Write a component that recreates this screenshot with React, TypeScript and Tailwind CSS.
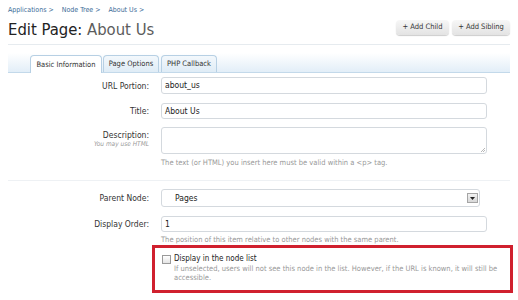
import React from 'react';

const Row = ({ label, sub, children, top, h }: { label: string; sub?: string; children: React.ReactNode; top: string; h?: string }) => (
  <div className={`flex ${top}`}>
    <div className={`w-[142px] shrink-0 pr-[1px] text-right ${h ?? ''}`}>
      <div className="text-[8.5px] leading-[10px] text-[#333]">{label}</div>
      {sub && <div className="text-[6.5px] italic leading-[9px] text-[#999]">{sub}</div>}
    </div>
    <div className="ml-[11px] flex-1">{children}</div>
  </div>
);

export default function App() {
  return (
    <div className="h-[300px] w-[518px] overflow-hidden bg-white px-[8px] font-['DejaVu_Sans_Condensed','DejaVu_Sans',sans-serif] text-[#333]">
      {/* breadcrumb */}
      <div className="flex gap-[8px] pt-[6px] text-[7px] leading-[9px] text-[#3c6c97]">
        <span>Applications &gt;</span>
        <span>Node Tree &gt;</span>
        <span>About Us &gt;</span>
      </div>

      {/* title + buttons */}
      <div className="mt-[4px] flex h-[22px] items-center justify-between border-b border-[#e6ebef] pb-[3px] box-content">
        <h1 className="text-[16.5px] leading-[20px] text-[#222]">
          Edit Page: <span className="text-[#5c5c5c]">About Us</span>
        </h1>
        <div className="flex gap-[3px] -mt-[6px]">
          <button className="h-[15px] w-[53px] rounded-[4px] bg-gradient-to-b from-[#f7f7f7] to-[#e3e3e3] text-[7.5px] text-[#333] shadow-[0_1px_1px_rgba(0,0,0,0.2)]">+ Add Child</button>
          <button className="h-[15px] w-[58px] rounded-[4px] bg-gradient-to-b from-[#f7f7f7] to-[#e3e3e3] text-[7.5px] text-[#333] shadow-[0_1px_1px_rgba(0,0,0,0.2)]">+ Add Sibling</button>
        </div>
      </div>

      {/* tabs */}
      <div className="mt-[8px] flex h-[20px] items-end border-b border-[#c3d9ea] bg-gradient-to-b from-white to-[#e2eef8] pl-[22px]">
        <div className="-mb-px flex h-[18px] w-[72px] items-center justify-center rounded-t-[4px] border border-b-0 border-[#b7d0e4] bg-white text-[7.5px] text-[#333]">Basic Information</div>
        <div className="ml-px flex h-[17px] w-[56px] items-center justify-center rounded-t-[4px] border border-b-0 border-[#b7d0e4] bg-gradient-to-b from-[#f3f8fc] to-[#dfecf6] text-[7.5px] text-[#333]">Page Options</div>
        <div className="ml-[2px] flex h-[17px] w-[56px] items-center justify-center rounded-t-[4px] border border-b-0 border-[#b7d0e4] bg-gradient-to-b from-[#f3f8fc] to-[#dfecf6] text-[7.5px] text-[#333]">PHP Callback</div>
      </div>

      {/* form */}
      <Row label="URL Portion:" top="mt-[4px] items-center">
        <div className="flex h-[17px] w-[326px] items-center rounded-[3px] border border-[#d4d9de] bg-white pl-[3px] text-[8.5px] text-[#222]">about_us</div>
      </Row>
      <Row label="Title:" top="mt-[9px] items-center">
        <div className="flex h-[16px] w-[326px] items-center rounded-[3px] border border-[#d4d9de] bg-white pl-[3px] text-[8.5px] text-[#222]">About Us</div>
      </Row>
      <Row label="Description:" sub="You may use HTML" top="mt-[8px] items-start" h="pt-[3px]">
        <div className="relative h-[27px] w-[326px] rounded-[3px] border border-[#d4d9de] bg-white">
          <svg className="absolute bottom-[1px] right-[1px]" width="5" height="5" viewBox="0 0 5 5">
            <path d="M1 5L5 1M3 5L5 3" stroke="#999" strokeWidth="0.7" />
          </svg>
        </div>
        <div className="mt-[4px] text-[7.5px] leading-[9px] text-[#999]">The text (or HTML) you insert here must be valid within a &lt;p&gt; tag.</div>
      </Row>

      <div className="mt-[13px] border-t border-[#eef1f4]" />

      <Row label="Parent Node:" top="mt-[8px] items-center">
        <div className="flex h-[18px] w-[319px] items-center justify-between rounded-[3px] border border-[#d4d9de] bg-white pl-[13px] pr-[1px] text-[8.5px] text-[#222]">
          <span>Pages</span>
          <span className="flex h-[10px] w-[11px] items-center justify-center border border-[#a5a5a5] bg-gradient-to-b from-[#f2f2f2] to-[#d8d8d8]">
            <svg width="5" height="3" viewBox="0 0 5 3"><path d="M0 0H5L2.5 3Z" fill="#222" /></svg>
          </span>
        </div>
      </Row>
      <Row label="Display Order:" top="mt-[9px] items-center">
        <div className="flex h-[16px] w-[326px] items-center rounded-[3px] border border-[#d4d9de] bg-white pl-[3px] text-[8.5px] text-[#222]">1</div>
      </Row>
      <div className="ml-[153px] mt-[3px] text-[7.5px] leading-[9px] text-[#999]">The position of this item relative to other nodes with the same parent.</div>

      <div className="ml-[144px] mt-[1px] h-[48px] w-[361px] border-[3px] border-[#d0202e] pl-[7px] pt-[6px]">
        <div className="flex items-center gap-[3px]">
          <span className="h-[9px] w-[9px] border border-[#9a9a9a] bg-gradient-to-b from-[#fff] to-[#e4e4e4]" />
          <span className="text-[8px] leading-[10px] text-[#222]">Display in the node list</span>
        </div>
        <div className="pl-[12px] pr-[4px] text-[7.5px] leading-[9px] text-[#999]">If unselected, users will not see this node in the list. However, if the URL is known, it will still be accessible.</div>
      </div>
    </div>
  );
}
